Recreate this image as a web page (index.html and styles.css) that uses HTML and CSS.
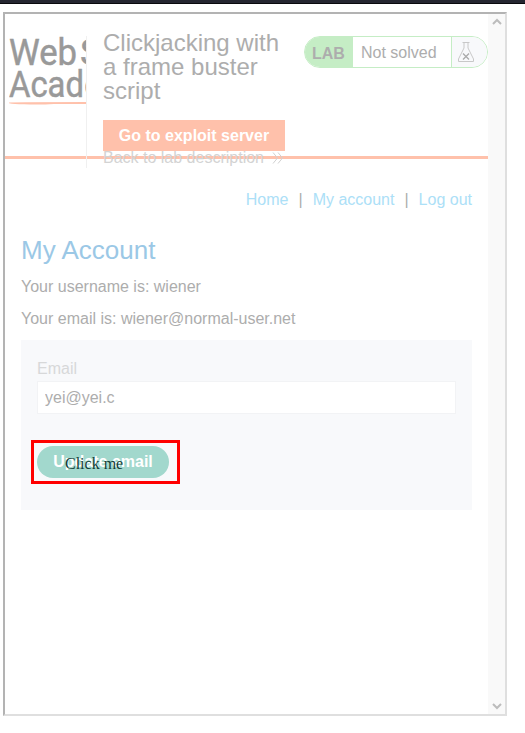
FILE: index.html
```
<!DOCTYPE html>
<html lang="en">
<head>
<meta charset="utf-8">
<title>My Account</title>
<link rel="stylesheet" href="styles.css">
</head>
<body>
<div class="topbar"></div>
<div class="frame">
  <div class="page">
    <header class="header">
      <svg class="logo" width="77" height="72" viewBox="0 0 77 72" role="img" aria-label="Web Security Academy">
        <text x="0" y="28.500" textLength="68" lengthAdjust="spacingAndGlyphs">Web</text>
        <text x="71" y="28.500">S</text>
        <text x="0" y="61" textLength="75" lengthAdjust="spacingAndGlyphs">Acad</text>
        <text x="75" y="61">e</text>
        <path class="swoosh" d="M-3 66.500Q4 66 77 66V68H45Q30 69 15 68.300Q1 68-3 66.500Z"/>
      </svg>
      <div class="title">
        <h2>Clickjacking with a frame buster script</h2>
        <a class="exploit">Go to exploit server</a>
        <a class="back">Back to lab description
          <svg width="12" height="12" viewBox="0 0 12 12"><path d="M1 .5 5.500 6 1 11.500M6 .5 10.500 6 6 11.500"/></svg></a>
      </div>
      <div class="status">
        <span class="lab">LAB</span>
        <span class="state">Not solved</span>
        <span class="flask"><svg width="18" height="22" viewBox="0 0 18 22"><path d="M5.500 1.500H12.500M7 1.500V7L1.500 18V20.500H16.500V18L11 7V1.500"/><path class="cross" d="M6 12.500 12 18.500M12 12.500 6 18.500"/></svg></span>
      </div>
    </header>
    <main class="main">
      <nav class="nav"><a>Home</a><span>|</span><a>My account</a><span>|</span><a>Log out</a></nav>
      <h1>My Account</h1>
      <p>Your username is: wiener</p>
      <p>Your email is: wiener@normal-user.net</p>
      <form class="panel">
        <label for="email">Email</label>
        <input id="email" type="text" value="yei@yei.c">
        <div class="action">
          <button type="button">Update email</button>
          <div class="highlight"></div>
          <div class="decoy">Click me</div>
        </div>
      </form>
    </main>
  </div>
  <div class="scrollbar">
    <svg width="10" height="8" viewBox="0 0 10 8"><path d="M1 6 5 2 9 6"/></svg>
    <svg width="10" height="8" viewBox="0 0 10 8"><path d="M1 2 5 6 9 2"/></svg>
  </div>
</div>
</body>
</html>
```
FILE: styles.css
```
* { box-sizing: border-box; }
body {
  margin: 0;
  background: #fff;
  color: #adadad;
  font: 16px/20px "Liberation Sans", Arial, sans-serif;
  overflow: hidden;
}
h1, h2, p { margin: 0; font-weight: 400; }
.topbar { height: 4px; background: #252630; border-bottom: 1px solid #09090c; }
.frame {
  display: flex;
  width: 504px;
  height: 704px;
  margin: 8px 0 0 3px;
  border: 2px solid;
  border-color: #b3b3b3 #dfdfdf #dfdfdf #b3b3b3;
}
.page { width: 483px; }
.header {
  display: flex;
  align-items: flex-start;
  height: 145px;
  padding: 22px 0 0 4px;
  border-bottom: 3px solid #ffc1ab;
}
.logo { display: block; flex: none; overflow: hidden; font: 400 37.5px Roboto, sans-serif; fill: #999; stroke: #999; stroke-width: .5; }
.swoosh { fill: #ffc1ab; stroke: none; }
.title {
  flex: none;
  width: 201px;
  height: 132px;
  padding-left: 16px;
  border-left: 1px solid #f0f0f0;
}
.title h2 { width: 190px; margin-top: -5px; font-size: 24px; line-height: 24px; }
.exploit {
  display: block;
  width: 182px;
  height: 31px;
  margin-top: 17px;
  background: #ffc1ab;
  color: #fff;
  font-weight: 700;
  line-height: 31px;
  text-align: center;
}
.back { display: flex; align-items: center; gap: 8px; margin-top: -3px; color: #d3d3d3; white-space: nowrap; }
.back svg, .flask svg, .scrollbar svg { fill: none; stroke: #d0d0d0; }
.status {
  display: flex;
  flex: none;
  width: 184px;
  height: 32px;
  margin-left: 17px;
  border: 1px solid #c5edc5;
  border-radius: 16px;
  overflow: hidden;
  line-height: 31px;
}
.lab { width: 48px; padding-left: 7px; background: #c5edc5; font-weight: 700; line-height: 33px; }
.state { width: 98px; padding-left: 8px; }
.flask { flex: 1; padding: 4px 0 0 5px; border-left: 1px solid #c5edc5; background: #f8f9fb; }
.flask svg { display: block; stroke: #c8c8c8; }
.flask .cross { stroke: #aaa; stroke-width: 1.3; }
.main { padding: 31px 16px 0; }
.nav { display: flex; justify-content: flex-end; gap: 10px; }
.nav a { color: #ace0f7; }
h1 { margin-top: 25px; color: #9bc8e6; font-size: 26px; line-height: 30px; }
p { margin-top: 12px; }
.panel { height: 170px; margin-top: 11px; padding: 19px 16px 18px; background: #f8f9fb; }
.panel label { display: block; height: 22px; color: #d7d8d9; }
.panel input {
  display: block;
  width: 419px;
  height: 33px;
  padding: 0 7px;
  border: 1px solid #f2f3f5;
  background: #fff;
  color: #adadad;
  font: inherit;
}
.action { position: relative; width: 132px; margin-top: 32px; }
.action button {
  display: block;
  width: 132px;
  height: 32px;
  padding: 0;
  border: 0;
  border-radius: 16px;
  background: #a2d8cd;
  color: #fff;
  font: 700 16px/32px "Liberation Sans", Arial, sans-serif;
}
.highlight { position: absolute; left: -6px; top: -6px; width: 149px; height: 44px; border: 3px solid #f00; }
.decoy { position: absolute; left: 28px; top: 8px; color: #123c35; font: 16px/20px "Liberation Serif", serif; white-space: nowrap; }
.scrollbar {
  display: flex;
  flex-direction: column;
  align-items: center;
  justify-content: space-between;
  width: 17px;
  padding: 4px 0;
  background: #f9f9f9;
}
.scrollbar svg { stroke: #bcbcbc; stroke-width: 2; }
```
